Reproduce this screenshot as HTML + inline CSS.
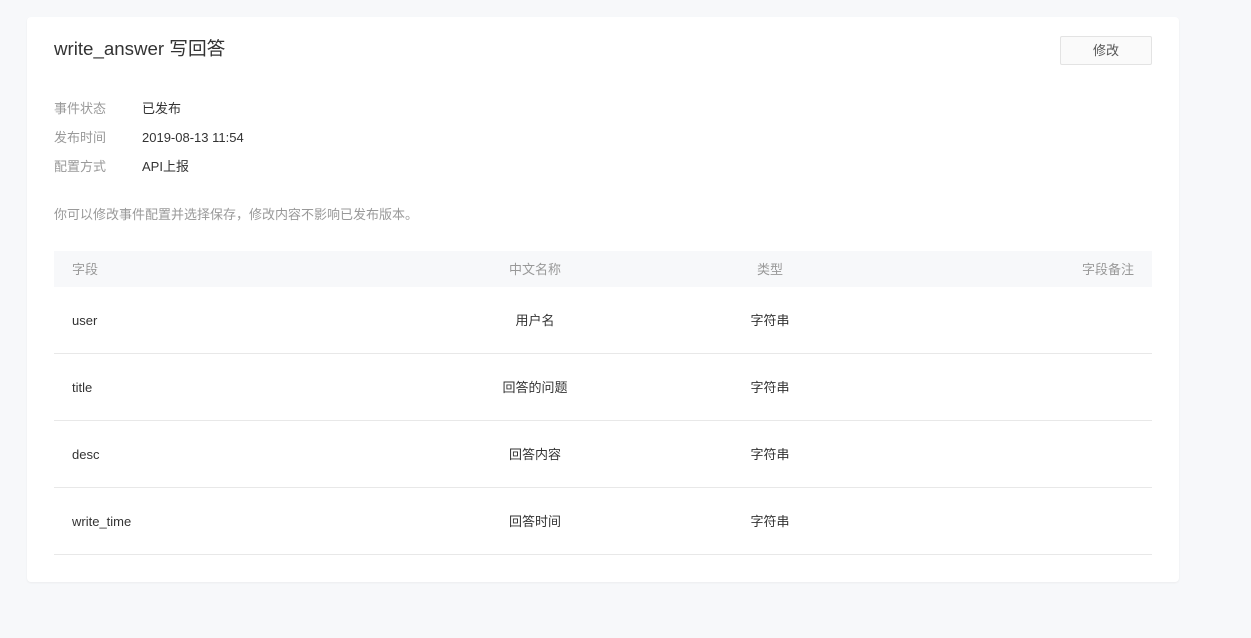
<!DOCTYPE html>
<html><head><meta charset="utf-8"><style>
*{margin:0;padding:0;box-sizing:border-box}
body{width:1251px;height:638px;background:#f7f8fa;font-family:"Liberation Sans","Noto Sans CJK SC",sans-serif;position:relative;overflow:hidden;color:#333}
.card{position:absolute;left:27px;top:17px;width:1152px;height:565px;background:#fff;border-radius:4px;box-shadow:0 1px 2px rgba(0,0,0,0.05)}
.title{position:absolute;left:27px;top:20px;font-size:18.7px;color:#333;line-height:24px}
.btn{position:absolute;left:1033px;top:19px;width:92px;height:29px;border:1px solid #e3e3e3;border-radius:2px;background:#fafafa;font-size:13px;color:#555;text-align:center;line-height:27px}
.kv{position:absolute;left:27px;font-size:13px;line-height:18px;color:#333}
.kv span{display:inline-block;width:88px;color:#999}
.note{position:absolute;left:27px;top:187px;font-size:13px;color:#999}
.tbl{position:absolute;left:27px;top:234px;width:1098px}
.hd{height:36px;line-height:37px;background:#f7f8fa;color:#999;font-size:13px;position:relative}
.row{height:67px;line-height:67px;border-bottom:1px solid #e8e8e8;position:relative;font-size:13px;color:#333}
.c{position:absolute;top:0;white-space:nowrap}
.c1{left:18px}.c2{left:481px;width:0;display:flex;justify-content:center}.c3{left:716px;width:0;display:flex;justify-content:center}.c4{right:18px}
</style></head><body>
<div class="card">
<div class="title">write_answer 写回答</div>
<div class="btn">修改</div>
<div class="kv" style="top:83px"><span>事件状态</span>已发布</div>
<div class="kv" style="top:112px"><span>发布时间</span>2019-08-13 11:54</div>
<div class="kv" style="top:141px"><span>配置方式</span>API上报</div>
<div class="note">你可以修改事件配置并选择保存，修改内容不影响已发布版本。</div>
<div class="tbl">
<div class="hd"><div class="c c1">字段</div><div class="c c2">中文名称</div><div class="c c3">类型</div><div class="c c4">字段备注</div></div>
<div class="row"><div class="c c1">user</div><div class="c c2">用户名</div><div class="c c3">字符串</div></div>
<div class="row"><div class="c c1">title</div><div class="c c2">回答的问题</div><div class="c c3">字符串</div></div>
<div class="row"><div class="c c1">desc</div><div class="c c2">回答内容</div><div class="c c3">字符串</div></div>
<div class="row"><div class="c c1">write_time</div><div class="c c2">回答时间</div><div class="c c3">字符串</div></div>
</div>
</div>
</body></html>
